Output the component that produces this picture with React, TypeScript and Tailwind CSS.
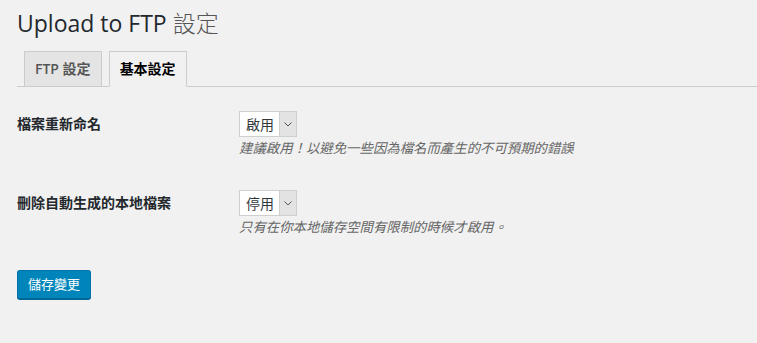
import React from 'react';

const font = { fontFamily: '"Open Sans", "Noto Sans CJK TC", sans-serif' };

interface Row {
  label: string;
  value: string;
  hint: string;
}

const rows: Row[] = [
  { label: '檔案重新命名', value: '啟用', hint: '建議啟用！以避免一些因為檔名而產生的不可預期的錯誤' },
  { label: '刪除自動生成的本地檔案', value: '停用', hint: '只有在你本地儲存空間有限制的時候才啟用。' },
];

const FakeSelect = ({ value }: { value: string }) => (
  <div className="flex h-[26px] w-[58px] border border-[#cfcfcf] bg-white">
    <div className="flex flex-1 items-center pl-[6px] text-[14px] text-[#32373c]">{value}</div>
    <div className="flex w-[17px] items-center justify-center border-l border-[#cfcfcf] bg-[#e3e3e3]">
      <svg width="8" height="5" viewBox="0 0 8 5" fill="none" stroke="#555" strokeWidth="1">
        <path d="M0.5 0.5 L4 4 L7.5 0.5" />
      </svg>
    </div>
  </div>
);

export default function App() {
  return (
    <div className="min-h-[343px] w-full bg-[#f1f1f1] pl-[17px] text-[#23282d]" style={font}>
      <h1 className="pt-[9px] text-[23px] leading-[29px] font-normal">
        Upload to FTP <span className="font-light text-[#555]">設定</span>
      </h1>

      {/* 分頁 */}
      <div className="mt-[13px] flex border-b border-[#ccc]">
        <div className="mb-[-1px] ml-[7px] border border-[#ccc] bg-[#e4e4e4] px-[10px] py-[5px] text-[14px] leading-[24px] font-semibold text-[#555]">
          FTP 設定
        </div>
        <div className="mb-[-1px] ml-[7px] border border-[#ccc] border-b-[#f1f1f1] bg-[#f1f1f1] px-[10px] py-[5px] text-[14px] leading-[24px] font-semibold text-black">
          基本設定
        </div>
      </div>

      <div className="flex flex-col gap-[33px] pt-[24px]">
        {rows.map((row) => (
          <div key={row.label} className="flex items-start">
            <div className="w-[222px] text-[14px] leading-[26px] font-bold">{row.label}</div>
            <div className="flex flex-col">
              <FakeSelect value={row.value} />
              <p className="mt-[2px] text-[13.4px] leading-[18px] italic text-[#666]">{row.hint}</p>
            </div>
          </div>
        ))}
      </div>

      <button className="mt-[34px] h-[29px] rounded-[3px] border border-[#0073aa] border-b-[#006799] bg-[#0085ba] px-[10px] text-[13px] text-white shadow-[0_1px_0_#006799]">
        儲存變更
      </button>
    </div>
  );
}
